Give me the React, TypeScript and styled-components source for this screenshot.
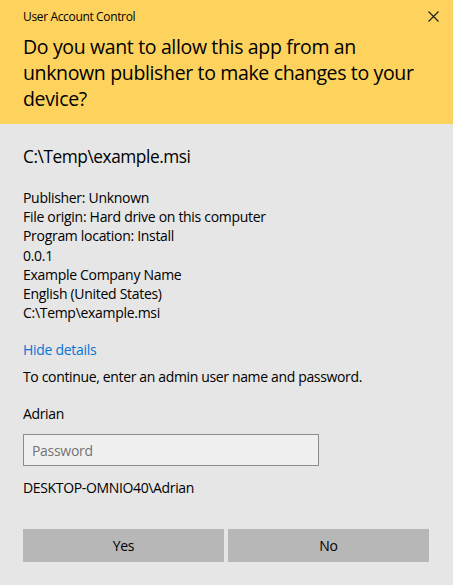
import React from "react";
import styled, { createGlobalStyle } from "styled-components";

const Global = createGlobalStyle`
  html, body { margin: 0; padding: 0; background: #e6e6e6; }
  body { font-family: "Open Sans", "Noto Sans", sans-serif; color: #000; }
  * { box-sizing: border-box; }
`;

const Dialog = styled.div`
  width: 453px;
  height: 585px;
  display: flex;
  flex-direction: column;
  background: #e6e6e6;
  overflow: hidden;
`;

const Header = styled.header`
  background: #fed35d;
  height: 124px;
  padding: 7px 12px 0 23px;
  display: flex;
  flex-direction: column;
`;

const TitleBar = styled.div`
  display: flex;
  justify-content: space-between;
  align-items: center;
  height: 18px;
`;

const Caption = styled.span`
  font-size: 12px;
  letter-spacing: -0.35px;
`;

const Close = styled.button`
  border: 0;
  background: none;
  padding: 0;
  width: 14px;
  height: 14px;
  display: flex;
  align-items: center;
  justify-content: center;
  margin-right: 1px;
`;

const Question = styled.h1`
  margin: 9px 0 0;
  font-size: 19.5px;
  font-weight: 400;
  line-height: 26px;
  letter-spacing: -0.35px;
`;

const Body = styled.main`
  flex: 1;
  padding: 22px 24px 0 23px;
  display: flex;
  flex-direction: column;
`;

const FileName = styled.div`
  font-size: 17.3px;
  letter-spacing: -0.45px;
  line-height: 22px;
`;

const Details = styled.div`
  margin-top: 20px;
  font-size: 14px;
  line-height: 19.2px;
  letter-spacing: -0.3px;
  display: flex;
  flex-direction: column;
`;

const Link = styled.a`
  margin-top: 18px;
  color: #0a73d6;
  font-size: 14px;
  letter-spacing: -0.3px;
  line-height: 19px;
  text-decoration: none;
`;

const Text = styled.div<{ $mt: number }>`
  margin-top: ${(p) => p.$mt}px;
  font-size: 14px;
  letter-spacing: -0.35px;
  line-height: 19px;
`;

const Input = styled.input`
  margin-top: 11px;
  width: 296px;
  height: 32px;
  border: 1px solid #8c8c8c;
  background: #f0f0f0;
  padding: 0 8px;
  font-family: inherit;
  font-size: 14px;
  letter-spacing: -0.3px;
  outline: none;
  &::placeholder { color: #737373; }
`;

const Buttons = styled.div`
  margin-top: 32px;
  display: grid;
  grid-template-columns: 201px 201px;
  gap: 4px;
`;

const Button = styled.button`
  height: 33px;
  border: 0;
  background: #b7b7b7;
  font-family: inherit;
  font-size: 14px;
  letter-spacing: -0.3px;
  color: #000;
`;

export default function App() {
  return (
    <Dialog>
      <Global />
      <Header>
        <TitleBar>
          <Caption>User Account Control</Caption>
          <Close aria-label="Close">
            <svg width="11" height="11" viewBox="0 0 11 11">
              <path d="M0.5 0.5L10.5 10.5M10.5 0.5L0.5 10.5" stroke="#1a1a1a" strokeWidth="1.1" />
            </svg>
          </Close>
        </TitleBar>
        <Question>
          Do you want to allow this app from an unknown publisher to make changes to your device?
        </Question>
      </Header>
      <Body>
        <FileName>C:\Temp\example.msi</FileName>
        <Details>
          <span>Publisher: Unknown</span>
          <span>File origin: Hard drive on this computer</span>
          <span>Program location: Install</span>
          <span>0.0.1</span>
          <span>Example Company Name</span>
          <span>English (United States)</span>
          <span>C:\Temp\example.msi</span>
        </Details>
        <Link href="#">Hide details</Link>
        <Text $mt={8}>To continue, enter an admin user name and password.</Text>
        <Text $mt={18}>Adrian</Text>
        <Input type="password" placeholder="Password" />
        <Text $mt={12}>DESKTOP-OMNIO40\Adrian</Text>
        <Buttons>
          <Button>Yes</Button>
          <Button>No</Button>
        </Buttons>
      </Body>
    </Dialog>
  );
}
